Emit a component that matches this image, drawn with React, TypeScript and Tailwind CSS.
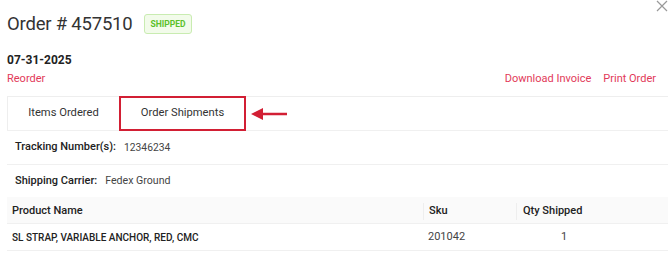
import React from "react";

export default function App() {
  return (
    <div className="relative w-[670px] h-[253px] bg-white overflow-hidden text-[#333]" style={{ fontFamily: "Roboto, 'Open Sans', 'Liberation Sans', sans-serif" }}>
      <button className="absolute right-[2px] top-[0px] text-[#999]">
        <svg width="12" height="12" viewBox="0 0 12 12" stroke="currentColor" strokeWidth="1.2"><path d="M1 1 L11 11 M11 1 L1 11" /></svg>
      </button>
      <div className="pl-[7px] pr-[14px] pt-[8px]">
        <div className="flex items-center gap-[11px] h-[32px]">
          <h1 className="text-[18.5px] leading-none text-[#333] tracking-[-0.2px]">Order # 457510</h1>
          <span className="px-[6px] h-[20px] flex items-center rounded-[3px] border border-[#c9ecb1] bg-[#f2fbea] text-[#5cc12a] text-[8.5px] font-bold">SHIPPED</span>
        </div>
        <div className="mt-[12px] text-[12px] font-bold text-[#222] leading-[16px]">07-31-2025</div>
        <div className="mt-[3px] flex justify-between text-[11px] text-[#e23a59] leading-[16px]">
          <span>Reorder</span>
          <div className="flex gap-[12px]">
            <span>Download Invoice</span>
            <span>Print Order</span>
          </div>
        </div>
      </div>
      <div className="mt-[9px] ml-[7px] mr-[2px]">
        <div className="relative flex h-[34px] border-t border-l border-[#eee] items-stretch">
          <div className="w-[111px] flex items-center justify-center text-[11.2px] text-[#333]">Items Ordered</div>
          <div className="w-[127px] -mt-[1px] -mb-[1px] border-2 border-[#d21f34] flex items-center justify-center text-[11.2px] text-[#333]">Order Shipments</div>
          <svg className="ml-[5px] self-center" width="36" height="14" viewBox="0 0 36 14">
            <path d="M36 7 H10" stroke="#d21f34" strokeWidth="2.5" />
            <path d="M0 7 L12 1 L12 13 Z" fill="#d21f34" />
          </svg>
        </div>
        <div className="flex items-center h-[34px] border-t border-[#f0f0f0] pl-[8px] text-[11px]">
          <span className="font-medium text-[#222]">Tracking Number(s):</span>
          <span className="ml-[8px] text-[#444] text-[10.3px]">12346234</span>
        </div>
        <div className="flex items-center h-[33px] border-t border-[#f0f0f0] pl-[8px] text-[11px]">
          <span className="font-medium text-[#222]">Shipping Carrier:</span>
          <span className="ml-[8px] text-[#444] text-[10.6px]">Fedex Ground</span>
        </div>
        <div className="grid grid-cols-[416px_93px_1fr] h-[27px] bg-[#fafafa] border-b border-[#f0f0f0] text-[11px] font-medium text-[#222]">
          <div className="flex items-center pl-[5px]">Product Name</div>
          <div className="flex items-center pl-[5px] border-l border-[#eee] my-[6px]">Sku</div>
          <div className="flex items-center pl-[6px] border-l border-[#eee] my-[6px]">Qty Shipped</div>
        </div>
        <div className="grid grid-cols-[416px_93px_1fr] h-[27px] border-b border-[#f0f0f0] text-[11px] text-[#222]">
          <div className="flex items-center pl-[5px] font-medium text-[10px]">SL STRAP, VARIABLE ANCHOR, RED, CMC</div>
          <div className="flex items-center pl-[5px] text-[#444]">201042</div>
          <div className="flex items-center pl-[45px] text-[#444]">1</div>
        </div>
      </div>
    </div>
  );
}
